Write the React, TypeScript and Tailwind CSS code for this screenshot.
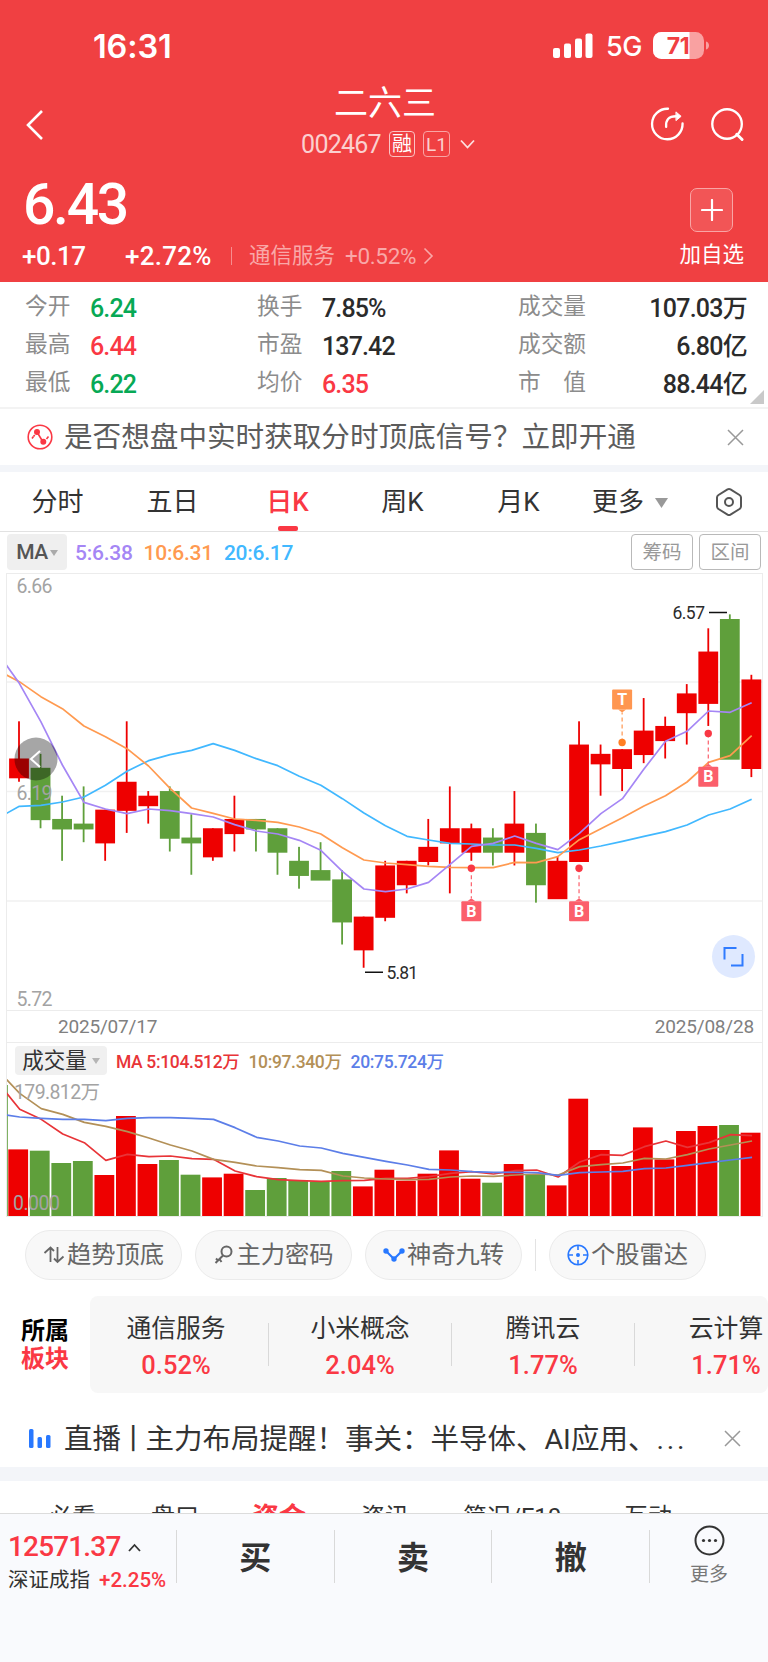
import React from 'react';

type Tone = 'up' | 'down' | 'flat';

interface Candle {
  up: boolean;
  high: number;
  top: number;
  bottom: number;
  low: number;
  vol: number;
}

interface Stat {
  label: string;
  value: string;
  tone: Tone;
}

interface MarkerProps {
  x: number;
  dotY: number;
  boxY: number;
  label: 'B' | 'T';
}

const toneClass: Record<Tone, string> = {
  up: 'text-[#fa3844]',
  down: 'text-[#07a955]',
  flat: 'text-[#2b2b2b]',
};

const RED = '#ee0000';
const GREEN = '#5f9f3b';
const STEP = 21.54;

// [up, high, top, bottom, low, volume bar height], prices in cents
const rawCandles: number[][] = [
  [1, 634, 626, 622, 621, 66.3],
  [0, 627, 624, 613, 611, 65],
  [0, 618, 613, 611, 604, 52.7],
  [0, 620, 612, 611, 608, 54.7],
  [1, 615, 615, 608, 604, 40.7],
  [1, 634, 621, 615, 610, 99.7],
  [1, 619, 618, 616, 612, 51.7],
  [0, 620, 619, 609, 606, 55.7],
  [0, 614, 609, 608, 601, 41],
  [1, 611, 611, 605, 604, 38.3],
  [1, 618, 613, 610, 606, 42],
  [0, 613, 613, 611, 606, 25.7],
  [0, 611, 611, 606, 601, 37.7],
  [0, 607, 604, 601, 598, 35.3],
  [0, 608, 602, 600, 600, 34.3],
  [0, 602, 600, 591, 586, 44.7],
  [1, 592, 592, 585, 581, 29.3],
  [1, 604, 603, 592, 591, 46],
  [1, 604, 604, 599, 597, 35],
  [1, 613, 607, 604, 603, 42],
  [1, 620, 611, 608, 597, 65.3],
  [1, 612, 611, 606, 604, 37],
  [0, 611, 609, 606, 603, 33],
  [1, 619, 612, 606, 603, 51.7],
  [0, 612, 610, 599, 595, 41.7],
  [1, 605, 604, 596, 596, 30.3],
  [1, 634, 629, 604, 604, 117],
  [1, 629, 627, 625, 618, 65.7],
  [1, 628, 628, 624, 619, 49.7],
  [1, 639, 632, 627, 625, 88.3],
  [1, 635, 633, 630, 626, 56.3],
  [1, 642, 640, 636, 629, 84.7],
  [1, 654, 649, 638, 633, 89.7],
  [0, 657, 656, 626, 626, 90.7],
  [1, 644, 643, 624, 622, 83],
];

const candles: Candle[] = rawCandles.map(([up, high, top, bottom, low, vol]) => ({
  up: up === 1,
  high,
  top,
  bottom,
  low,
  vol,
}));

// Line heights in thirds of a pixel; the first value sits on the left edge of the plot
const priceMa = [
  {
    color: '#41b8ff',
    points: [731, 709, 706, 696, 681, 646, 604, 572, 554, 541, 521, 541, 566, 587, 619, 646, 686, 729, 767, 799, 810, 820, 822, 825, 825, 835, 848, 840, 828, 814, 799, 785, 765, 735, 717, 688],
  },
  {
    color: '#ff9a50',
    points: [314, 335, 380, 416, 468, 500, 536, 588, 655, 714, 730, 747, 751, 757, 771, 792, 833, 870, 879, 884, 889, 892, 893, 893, 877, 878, 860, 809, 776, 743, 708, 677, 636, 577, 557, 497],
  },
  {
    color: '#a586f5',
    points: [284, 340, 455, 585, 697, 717, 731, 717, 722, 731, 741, 764, 783, 792, 811, 841, 904, 957, 965, 957, 937, 883, 829, 820, 798, 820, 839, 790, 731, 686, 597, 514, 484, 423, 427, 398],
  },
];

const volumeMa = [
  {
    color: '#e83438',
    points: [157, 208, 238, 282, 308, 361, 343, 350, 348, 356, 358, 393, 410, 419, 422, 424, 422, 421, 415, 415, 410, 400, 395, 402, 392, 390, 411, 366, 344, 346, 320, 303, 322, 308, 284, 287],
  },
  {
    color: '#b39057',
    points: [117, 160, 206, 223, 247, 259, 275, 294, 315, 333, 358, 367, 378, 383, 389, 391, 408, 414, 417, 419, 418, 411, 408, 409, 405, 402, 405, 380, 374, 369, 355, 357, 344, 327, 315, 303],
  },
  {
    color: '#5c7ee8',
    points: [225, 231, 235, 238, 238, 242, 235, 233, 233, 235, 238, 263, 292, 303, 318, 324, 340, 352, 364, 375, 388, 390, 395, 397, 397, 398, 406, 398, 396, 394, 386, 384, 376, 368, 360, 352],
  },
];

const centerX = (i: number) => 19 + i * STEP;
const priceY = (cents: number) => 3.5 + (666 - cents) * 4.65;
const linePoints = (points: number[], shift: number) =>
  points.map((p, i) => `${i === 0 ? 6 : centerX(i - 1) + shift},${p / 3}`).join(' ');

const statColumns: { labelWidth: string; className: string; stats: Stat[] }[] = [
  {
    labelWidth: 'w-[65px]',
    className: 'w-[232px]',
    stats: [
      { label: '今开', value: '6.24', tone: 'down' },
      { label: '最高', value: '6.44', tone: 'up' },
      { label: '最低', value: '6.22', tone: 'down' },
    ],
  },
  {
    labelWidth: 'w-[65px]',
    className: 'w-[261px]',
    stats: [
      { label: '换手', value: '7.85%', tone: 'flat' },
      { label: '市盈', value: '137.42', tone: 'flat' },
      { label: '均价', value: '6.35', tone: 'up' },
    ],
  },
  {
    labelWidth: 'w-[69px]',
    className: 'w-[229px]',
    stats: [
      { label: '成交量', value: '107.03万', tone: 'flat' },
      { label: '成交额', value: '6.80亿', tone: 'flat' },
      { label: '市　值', value: '88.44亿', tone: 'flat' },
    ],
  },
];

const periods = [
  { name: '分时', className: 'ml-[31px] w-[53px]' },
  { name: '五日', className: 'ml-[62px] w-[53px]' },
  { name: '日K', className: 'ml-[65px] w-[47px]' },
  { name: '周K', className: 'ml-[68px] w-[47px]' },
  { name: '月K', className: 'ml-[69px] w-[47px]' },
];

const sectors = [
  { name: '通信服务', change: '0.52%' },
  { name: '小米概念', change: '2.04%' },
  { name: '腾讯云', change: '1.77%' },
  { name: '云计算', change: '1.71%' },
];

const StatusBar: React.FC = () => (
  <div className="flex h-20 items-center pt-3 pl-[93px] font-['Inter','Noto_Sans_CJK_SC',sans-serif]">
    <span className="w-[460px] pt-0.5 text-[32.500px] font-semibold tracking-[-0.005em]">16:31</span>
    <svg width="41" height="26" viewBox="0 0 41 26" fill="#fff">
      <rect x="0" y="15" width="7" height="10" rx="2" />
      <rect x="11" y="10.5" width="7" height="14.5" rx="2" />
      <rect x="22" y="5.5" width="7" height="19.5" rx="2" />
      <rect x="32.500" y="0.500" width="7" height="24.500" rx="2" />
    </svg>
    <span className="ml-3 w-[47px] pt-[3px] text-[27px] font-medium tracking-[-0.02em]">5G</span>
    <svg width="58" height="28" viewBox="0 0 58 28">
      <defs>
        <clipPath id="battery">
          <rect width="51" height="27" rx="8.500" />
        </clipPath>
      </defs>
      <g clipPath="url(#battery)">
        <rect width="51" height="27" fill="#f9a1a1" />
        <rect width="36.500" height="27" fill="#fff" />
      </g>
      <path d="M53 9.500c4 1 4 7 0 8z" fill="#f9a1a1" />
      <text x="25" y="22" textAnchor="middle" fontSize="23" fontWeight="700" fill="#f04042" letterSpacing="-0.5">
        71
      </text>
    </svg>
  </div>
);

const Header: React.FC = () => (
  <header className="h-[282px] shrink-0 bg-[#f04042] text-white">
    <StatusBar />
    <div className="flex h-[84px] justify-between pr-[22px] pl-6">
      <svg className="mt-[29px]" width="96" height="32" viewBox="0 0 96 32" fill="none" stroke="#fff" strokeWidth="2.600">
        <path d="M18 2 4 16l14 14" />
      </svg>
      <div className="ml-[6px] flex flex-col items-center">
        <div className="-ml-1.5 text-[34px] leading-[46px]">二六三</div>
        <div className="-mt-0.5 flex h-10 items-center text-[25px] text-[#fbd0d0]">
          <span className="pt-0.5 tracking-[-0.030em]">002467</span>
          <span className="ml-2 flex size-[26px] items-center justify-center rounded-[4px] border border-[#fbc4c4] text-[20px] leading-none text-white">
            融
          </span>
          <span className="ml-2 flex h-[26px] w-[27px] items-center justify-center rounded-[4px] border border-[#f9a5a5] text-[19px] leading-none">
            L1
          </span>
          <svg className="ml-[10px]" width="15" height="11" viewBox="0 0 15 11" fill="none" stroke="#fde0e0" strokeWidth="1.800">
            <path d="m1 1.500 6.500 7 6.500-7" />
          </svg>
        </div>
      </div>
      <div className="flex w-[96px] gap-[26px] pt-[26px]">
        <svg width="36" height="36" viewBox="0 0 36 36" fill="none" stroke="#fff" strokeWidth="2.400" strokeLinecap="round">
          <path d="M18.500 2.300A15.700 15.700 0 1 0 33.500 17.500" />
          <path d="M16.600 21c-.6-7 2.400-11 10.400-11" />
          <path d="m27 5.800 5 4.300-5 4.200z" fill="#fff" strokeWidth="1" strokeLinejoin="round" />
        </svg>
        <svg width="36" height="36" viewBox="0 0 36 36" fill="none" stroke="#fff" strokeWidth="2.400">
          <circle cx="16.500" cy="18" r="15.200" />
          <path d="m26.500 28.500 5.500 5.500" strokeWidth="3" strokeLinecap="round" />
        </svg>
      </div>
    </div>
    <div className="flex justify-between pr-6 pl-[23px]">
      <div>
        <div className="h-20 text-[57px] leading-[82px] font-medium tracking-[-0.04em]">6.43</div>
        <div className="flex h-6 items-center text-[26px] leading-6 font-medium">
          <span className="-ml-px w-[103px] tracking-[-0.020em]">+0.17</span>
          <span className="w-[106px] tracking-[0.010em]">+2.72%</span>
          <span className="h-[18px] w-px bg-[#f78d8e]" />
          <span className="ml-[17px] text-[21.500px] font-normal text-[#f9a8a8]">通信服务</span>
          <span className="ml-2.5 text-[22.500px] font-normal tracking-[-0.015em] text-[#f9a8a8]">+0.52%</span>
          <svg className="ml-[7px]" width="11" height="18" viewBox="0 0 11 18" fill="none" stroke="#f9a8a8" strokeWidth="1.600">
            <path d="m1.500 1.500 7.500 7.500-7.500 7.500" />
          </svg>
        </div>
      </div>
      <div className="flex flex-col items-center pt-6">
        <div className="flex h-11 w-[43px] items-center justify-center rounded-[7px] border border-[#f9a5a5] bg-[#f25556]">
          <svg width="22" height="22" viewBox="0 0 22 22" stroke="#fff" strokeWidth="2.200" strokeLinecap="round">
            <path d="M11 1v20M1 11h20" />
          </svg>
        </div>
        <div className="mt-[7px] text-[21.500px] leading-8">加自选</div>
      </div>
    </div>
  </header>
);

const StatsGrid: React.FC = () => (
  <section className="relative flex h-[127px] shrink-0 border-b-2 border-[#f3f3f3] pt-[7px] pl-[25px]">
    {statColumns.map((col, i) => (
      <div key={i} className={col.className}>
        {col.stats.map((s) => (
          <div key={s.label} className="flex h-[37.700px] items-center">
            <span className={`${col.labelWidth} shrink-0 text-[22.700px] leading-none whitespace-nowrap text-[#8c8c8c]`}>{s.label}</span>
            <span
              className={`pt-0.5 text-[25px] leading-none font-medium whitespace-nowrap ${i === 2 ? 'ml-auto tracking-[-0.030em]' : 'tracking-[-0.035em]'} ${toneClass[s.tone]}`}
            >
              {s.value}
            </span>
          </div>
        ))}
      </div>
    ))}
    <svg className="absolute right-1 bottom-[3px]" width="14" height="14">
      <path d="M14 0v14H0z" fill="#c9c9c9" />
    </svg>
  </section>
);

const CloseIcon: React.FC = () => (
  <svg width="17" height="17" viewBox="0 0 17 17" stroke="#999" strokeWidth="1.500">
    <path d="m1 1 15 15M16 1 1 16" />
  </svg>
);

const SignalBanner: React.FC = () => (
  <div className="flex h-14 shrink-0 items-center pr-6 pl-[27px] text-[#5c5c5c]">
    <svg width="26" height="26" viewBox="0 0 26 26" fill="none" stroke="#fa3844" strokeWidth="1.600">
      <circle cx="13" cy="13" r="11.800" />
      <path d="m5 14.500 1.500-2M10 8l6 10M19.500 15l2-2.500" />
      <path d="M6.500 12.500 10 8" strokeDasharray="2 1.500" />
      <circle cx="10" cy="8" r="2.200" fill="#fa3844" />
      <circle cx="16.300" cy="17.800" r="2.200" fill="#fa3844" />
    </svg>
    <span className="mr-auto ml-[11px] pt-px text-[28.600px] leading-none">是否想盘中实时获取分时顶底信号？立即开通</span>
    <CloseIcon />
  </div>
);

const PeriodTabs: React.FC = () => (
  <nav className="flex h-[60px] shrink-0 border-b border-[#e2e2e2] text-[26px] text-[#333]">
    {periods.map((p) => {
      const active = p.name === '日K';
      return (
        <div key={p.name} className={`flex flex-col items-center whitespace-nowrap ${p.className} ${active ? 'font-medium text-[#fa3844]' : ''}`}>
          <span className="h-[54px] leading-[61px]">{p.name}</span>
          {active && <span className="h-[5px] w-5 rounded-[2px] bg-[#fa3844]" />}
        </div>
      );
    })}
    <span className="ml-[50px] leading-[61px]">更多</span>
    <svg className="mt-[25px] ml-[11px]" width="13" height="11">
      <path d="M0 1h13L6.500 11z" fill="#999" />
    </svg>
    <svg className="mt-[15px] ml-[47px]" width="28" height="30" viewBox="0 0 28 30" fill="none" stroke="#555" strokeWidth="2">
      <path d="M12.500 2.400q1.500-.8 3 0L24.500 8q1.500 1 1.500 2.500v9q0 1.500-1.500 2.500l-9 5.600q-1.500.8-3 0L3.500 22Q2 21 2 19.500v-9Q2 9 3.500 8z" />
      <circle cx="14" cy="15" r="4" />
    </svg>
  </nav>
);

const Marker: React.FC<MarkerProps> = ({ x, dotY, boxY, label }) => {
  const isT = label === 'T';
  const fill = isT ? '#ff9650' : '#fb5f6b';
  const edge = isT ? boxY + 20 : boxY;
  const tip = isT ? edge + 3 : edge - 3;
  return (
    <g>
      <line x1={x} x2={x} y1={dotY} y2={tip} stroke={fill} strokeWidth="1.200" strokeDasharray="4 3" />
      <circle cx={x} cy={dotY} r="3.700" fill={isT ? '#ff7f24' : '#f93844'} />
      <rect x={x - 10} y={boxY} width="20" height="20" rx="1" fill={fill} />
      <path d={`M${x - 4} ${edge}L${x} ${tip}L${x + 4} ${edge}z`} fill={fill} />
      <text x={x} y={boxY + 15.500} textAnchor="middle" fontSize="16" fontWeight="700" fill="#fff">
        {label}
      </text>
    </g>
  );
};

const CandleChart: React.FC = () => (
  <svg className="block" width="755" height="436" viewBox="7 4 755 436">
    {[112, 221.5, 331].map((y) => (
      <line key={y} x1="6" x2="762" y1={y} y2={y} stroke="#f1f1f1" strokeWidth="1.500" />
    ))}
    {candles.map((c, i) => {
      const color = c.up ? RED : GREEN;
      const top = priceY(c.top) - 1;
      return (
        <g key={i} fill={color}>
          <rect x={centerX(i) - 0.9} y={priceY(c.high) - 1} width="1.800" height={priceY(c.low) - priceY(c.high)} />
          <rect x={centerX(i) - 9.9} y={top} width="19.800" height={priceY(c.bottom) - top + 0.2} />
        </g>
      );
    })}
    <g fill="none" strokeWidth="1.700" strokeLinejoin="round">
      {priceMa.map((ma) => (
        <polyline key={ma.color} points={linePoints(ma.points, 0.3)} stroke={ma.color} />
      ))}
    </g>
    <Marker x={centerX(21)} dotY={298.3} boxY={331.3} label="B" />
    <Marker x={centerX(26)} dotY={298.3} boxY={331.3} label="B" />
    <Marker x={centerX(32)} dotY={163.5} boxY={196.7} label="B" />
    <Marker x={centerX(28)} dotY={172.5} boxY={119.5} label="T" />
    <g fontSize="19.500" fill="#a3a3a3">
      <text x="16.500" y="23" textLength="36">6.66</text>
      <text x="16.500" y="229.500" textLength="36">6.19</text>
      <text x="16.500" y="436" textLength="36">5.72</text>
    </g>
    <g fontSize="17.500" fill="#2b2b2b">
      <text x="386.500" y="409" textLength="31.500">5.81</text>
      <text x="672.500" y="49" textLength="32.500">6.57</text>
    </g>
    <path d="M365 402.300h18M709 42.500h18" stroke="#111" strokeWidth="1.600" />
    <circle cx="36" cy="189" r="21.500" fill="#000" fillOpacity="0.350" />
    <path d="m40 181-9 8 9 8" fill="none" stroke="#fff" strokeWidth="2" />
    <circle cx="733.500" cy="386.500" r="21.500" fill="#dfe9ff" />
    <path d="M736.500 378h-12v11.500M731 395.500h11.500V384" fill="none" stroke="#2f7bff" strokeWidth="2" />
  </svg>
);

const VolumeChart: React.FC = () => (
  <svg className="block" width="755" height="139" viewBox="7 37 755 139">
    <rect x="6" y="45" width="1.800" height="131" fill={GREEN} />
    {candles.map((c, i) => (
      <rect key={i} x={centerX(i) - 10.7} y={175.7 - c.vol} width="19.800" height={c.vol + 0.3} fill={c.up ? RED : GREEN} />
    ))}
    <g fill="none" strokeWidth="1.700" strokeLinejoin="round">
      {volumeMa.map((ma) => (
        <polyline key={ma.color} points={linePoints(ma.points, 0.7)} stroke={ma.color} />
      ))}
    </g>
    <g fontSize="19.500" fill="#a3a3a3">
      <text x="14" y="59" textLength="86">179.812万</text>
      <text x="13" y="169.500" textLength="47">0.000</text>
    </g>
  </svg>
);

const ChartPanel: React.FC = () => (
  <section className="shrink-0">
    <div className="flex h-[41px] items-start pt-[2px] pr-[7px] pl-[7px]">
      <span className="flex h-9 w-[60px] items-center justify-center gap-[2px] rounded-[4px] bg-[#efefef] pt-px text-[21px] font-medium tracking-[-0.020em] text-[#555]">
        MA
        <svg width="8" height="6">
          <path d="M0 0h8L4 6z" fill="#aaa" />
        </svg>
      </span>
      <div className="flex gap-[11px] pl-2 text-[21px] leading-[38px] font-medium tracking-[-0.012em]">
        <span className="text-[#a586f5]">5:6.38</span>
        <span className="text-[#ff9a50]">10:6.31</span>
        <span className="text-[#41b8ff]">20:6.17</span>
      </div>
      <div className="ml-auto flex gap-1.5 text-[19.500px] text-[#999]">
        <span className="flex h-9 w-[62px] items-center justify-center rounded-[4px] border border-[#b9b9b9] pt-px">筹码</span>
        <span className="flex h-9 w-[62px] items-center justify-center rounded-[4px] border border-[#b9b9b9] pt-px">区间</span>
      </div>
    </div>
    <div className="ml-1.5 w-[757px] border border-[#ececec]">
      <CandleChart />
      <div className="flex h-8 items-center justify-between border-t border-[#ececec] pt-0.5 pr-2 pl-[51px] text-[19px] tracking-[-0.010em] text-[#808080]">
        <span>2025/07/17</span>
        <span>2025/08/28</span>
      </div>
      <div className="flex h-[35px] items-start border-t border-[#ececec] pt-[3px] pl-2">
        <span className="flex h-[29px] w-[92px] items-center justify-center gap-[5px] rounded-[4px] bg-[#f0f0f0] text-[21.500px] leading-none text-[#333]">
          成交量
          <svg width="8" height="6">
            <path d="M0 0h8L4 6z" fill="#b5b5b5" />
          </svg>
        </span>
        <div className="flex gap-[9px] pl-[9px] text-[17.500px] leading-[33px] font-medium tracking-[-0.020em]">
          <span className="text-[#e83438]">MA 5:104.512万</span>
          <span className="text-[#b39057]">10:97.340万</span>
          <span className="text-[#5c7ee8]">20:75.724万</span>
        </div>
      </div>
      <VolumeChart />
    </div>
  </section>
);

const Pill: React.FC<{ label: string; children: React.ReactNode }> = ({ label, children }) => (
  <div className="flex h-[50px] w-[157px] shrink-0 items-center justify-center gap-[2px] rounded-full border border-[#ebebeb] bg-[#f8f8f8] text-[24.300px] leading-none text-[#666]">
    {children}
    {label}
  </div>
);

const ToolPills: React.FC = () => (
  <div className="flex h-[79px] shrink-0 items-center gap-[13px] pb-[3px] pl-[25px]">
    <Pill label="趋势顶底">
      <svg width="22" height="20" viewBox="0 0 22 20" fill="none" stroke="#666" strokeWidth="1.800">
        <path d="M7.500 17V3M1.500 8l6-5.500L11 6M14.500 2v15M11 13.500l3.500 3.500 6-5.500" />
      </svg>
    </Pill>
    <Pill label="主力密码">
      <svg width="21" height="20" viewBox="0 0 21 20" fill="none" stroke="#666" strokeWidth="2">
        <circle cx="13.500" cy="6.500" r="5" />
        <path d="m10 10.500-7.500 7.500M6.500 14l2 3M3 13.500l2.500 2.500" />
      </svg>
    </Pill>
    <Pill label="神奇九转">
      <svg width="22" height="16" viewBox="0 0 22 16" fill="none" stroke="#2878ff" strokeWidth="2.200">
        <path d="m3 4 8 8 8-8" />
        <g fill="#2878ff" stroke="none">
          <circle cx="3" cy="4" r="2.700" />
          <circle cx="19" cy="4" r="2.700" />
          <circle cx="11" cy="12" r="2.700" />
        </g>
      </svg>
    </Pill>
    <span className="h-8 w-px bg-[#e3e3e3]" />
    <Pill label="个股雷达">
      <svg width="22" height="22" viewBox="0 0 22 22" fill="none" stroke="#2878ff" strokeWidth="1.600">
        <circle cx="11" cy="11" r="9.800" />
        <path d="M11 1v5M11 16v5M1 11h5M16 11h5" />
        <circle cx="11" cy="11" r="2" fill="#2878ff" stroke="none" />
      </svg>
    </Pill>
  </div>
);

const SectorStrip: React.FC = () => (
  <section className="flex h-[97px] shrink-0 overflow-hidden">
    <div className="w-[90px] shrink-0 pt-[21px] pl-[21px] text-[24px] leading-[28px] font-bold">
      <div className="text-black">所属</div>
      <div className="text-[#fa3844]">板块</div>
    </div>
    <div className="flex w-[678px] shrink-0 items-center overflow-hidden rounded-[8px] bg-[#f7f7f7]">
      {sectors.map((s, i) => (
        <React.Fragment key={s.name}>
          {i > 0 && <span className="h-[43px] w-px shrink-0 bg-[#d9d9d9]" />}
          <div className={`shrink-0 pt-[6px] text-center ${i === 0 ? 'w-[178px] pr-[6px]' : 'w-[182px]'}`}>
            <div className="text-[24.800px] leading-[36px] text-[#333]">{s.name}</div>
            <div className="text-[25.500px] leading-[37px] font-medium text-[#fa3844]">{s.change}</div>
          </div>
        </React.Fragment>
      ))}
    </div>
  </section>
);

const LiveRow: React.FC = () => (
  <div className="flex h-[74px] shrink-0 items-center pt-[17px] pr-[27px] pl-[29px]">
    <svg width="22" height="20" viewBox="0 0 22 20" fill="#2878ff">
      <rect x="0" y="0" width="4.500" height="19" rx="1.500" />
      <rect x="8.500" y="8" width="4.500" height="11" rx="1.500" />
      <rect x="17" y="6" width="4.500" height="13" rx="1.500" />
    </svg>
    <span className="mr-auto ml-[13px] pt-[3px] text-[28.500px] leading-none whitespace-nowrap text-[#333]">
      直播<span className="-mx-0.5">丨</span>主力布局提醒！事关：半导体、AI应用、<span className="tracking-[0.100em]">...</span>
    </span>
    <CloseIcon />
  </div>
);

const SectionTabs: React.FC = () => (
  <nav className="flex h-8 shrink-0 overflow-hidden pt-[20px] text-[24px] leading-[32px] whitespace-nowrap text-[#333]">
    <span className="ml-[48px] w-[103px]">必看</span>
    <span className="w-[101px]">盘口</span>
    <span className="w-[109px] text-[27px] leading-[35px] font-bold text-[#fa3844]">资金</span>
    <span className="w-[102px]">资讯</span>
    <span className="w-[161px]">简况/F10</span>
    <span>互动</span>
  </nav>
);

const BottomBar: React.FC = () => (
  <footer className="flex flex-1 border-t border-[#dcdcdc] bg-[#f9fafd]">
    <div className="w-[176px] pt-[15px] pl-2">
      <div className="flex h-9 items-center gap-[8px] text-[28px] font-medium tracking-[-0.030em] text-[#fa3844]">
        12571.37
        <svg width="13" height="9" viewBox="0 0 13 9" fill="none" stroke="#333" strokeWidth="1.800">
          <path d="m1 8 5.500-6L12 8" />
        </svg>
      </div>
      <div className="flex h-[30px] items-center text-[20.500px] whitespace-nowrap text-[#333]">
        深证成指
        <span className="ml-[9px] font-medium text-[#fa3844]">+2.25%</span>
      </div>
    </div>
    {['买', '卖', '撤'].map((action) => (
      <div key={action} className="flex w-[157.700px] pt-4 text-[32px] font-bold text-[#333]">
        <span className="h-[53px] w-px bg-[#d9d9d9]" />
        <span className="flex-1 text-center leading-[57px]">{action}</span>
      </div>
    ))}
    <span className="mt-4 h-[53px] w-px bg-[#d9d9d9]" />
    <div className="flex flex-1 flex-col items-center pt-[11px] text-[19px] text-[#777]">
      <svg width="31" height="31" viewBox="0 0 31 31" fill="none" stroke="#333" strokeWidth="2">
        <circle cx="15.500" cy="15.500" r="14" />
        <g fill="#333" stroke="none">
          <circle cx="9.500" cy="15.500" r="1.600" />
          <circle cx="15.500" cy="15.500" r="1.600" />
          <circle cx="21.500" cy="15.500" r="1.600" />
        </g>
      </svg>
      <span className="mt-[3px] leading-8">更多</span>
    </div>
  </footer>
);

const App: React.FC = () => (
  <div className="flex h-[1662px] w-[768px] flex-col overflow-hidden bg-white font-['Roboto','Noto_Sans_CJK_SC',sans-serif]">
    <Header />
    <StatsGrid />
    <SignalBanner />
    <div className="h-[7px] shrink-0 bg-[#f3f5f9]" />
    <PeriodTabs />
    <ChartPanel />
    <ToolPills />
    <SectorStrip />
    <LiveRow />
    <div className="h-[14px] shrink-0 bg-[#f3f5f9]" />
    <SectionTabs />
    <BottomBar />
  </div>
);

export default App;
